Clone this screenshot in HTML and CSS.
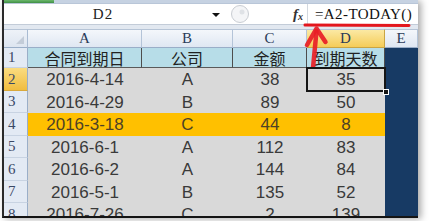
FILE: index.html
```html
<!DOCTYPE html>
<html>
<head>
<meta charset="utf-8">
<link rel="stylesheet" href="styles.css">
</head>
<body>
<div class="window">
  <div class="topstrip"><div class="green"></div></div>
  <div class="fbar">
    <div class="namebox">D2</div>
    <div class="nbdrop"><span class="tri"></span></div>
    <div class="splitter">
      <svg width="20" height="21" viewBox="0 0 20 21">
        <circle cx="10" cy="10" r="8.5" fill="#f4f5f7" stroke="#c9cdd3" stroke-width="1"/>
        <circle cx="12" cy="8" r="2.5" fill="#dfe2e6"/>
      </svg>
    </div>
    <div class="fxzone"><span class="fx"><i>f</i><span class="fxx">x</span></span></div>
    <div class="finput">=A2-TODAY()</div>
  </div>
  <div class="gap"></div>
  <div class="sheet">
    <div class="corner"><span class="corner-tri"></span></div>
    <div class="colh">A</div>
    <div class="colh">B</div>
    <div class="colh">C</div>
    <div class="colh colh-sel">D</div>
    <div class="colh">E</div>

    <div class="rowh">1</div>
    <div class="head">合同到期日</div>
    <div class="head">公司</div>
    <div class="head">金额</div>
    <div class="head">到期天数</div>
    <div class="ecol"></div>

    <div class="rowh rowh-sel">2</div>
    <div class="cell">2016-4-14</div>
    <div class="cell">A</div>
    <div class="cell">38</div>
    <div class="cell cell-sel">35<span class="handle"></span></div>
    <div class="ecol"></div>

    <div class="rowh">3</div>
    <div class="cell">2016-4-29</div>
    <div class="cell">B</div>
    <div class="cell">89</div>
    <div class="cell">50</div>
    <div class="ecol"></div>

    <div class="rowh">4</div>
    <div class="cell hl">2016-3-18</div>
    <div class="cell hl">C</div>
    <div class="cell hl">44</div>
    <div class="cell hl">8</div>
    <div class="ecol"></div>

    <div class="rowh">5</div>
    <div class="cell">2016-6-1</div>
    <div class="cell">A</div>
    <div class="cell">112</div>
    <div class="cell">83</div>
    <div class="ecol"></div>

    <div class="rowh">6</div>
    <div class="cell">2016-6-2</div>
    <div class="cell">A</div>
    <div class="cell">144</div>
    <div class="cell">84</div>
    <div class="ecol"></div>

    <div class="rowh">7</div>
    <div class="cell">2016-5-1</div>
    <div class="cell">B</div>
    <div class="cell">135</div>
    <div class="cell">52</div>
    <div class="ecol"></div>

    <div class="rowh">8</div>
    <div class="cell">2016-7-26</div>
    <div class="cell">C</div>
    <div class="cell">2</div>
    <div class="cell">139</div>
    <div class="ecol"></div>
  </div>
</div>
<svg class="annot" width="430" height="221" viewBox="0 0 430 221">
  <line x1="305" y1="25" x2="409" y2="25.5" stroke="#e3161d" stroke-width="3" stroke-linecap="round"/>
  <path d="M313 68 L316.5 31" stroke="#e81e26" stroke-width="4.5" stroke-linecap="round" fill="none" opacity="0.92"/>
  <path d="M307 45 L316.5 28.5 L325.5 42" stroke="#e81e26" stroke-width="4.5" stroke-linecap="round" stroke-linejoin="round" fill="none" opacity="0.92"/>
</svg>
</body>
</html>
```

FILE: styles.css
```css
* { box-sizing: border-box; }

html, body {
  margin: 0;
  padding: 0;
  background: #ffffff;
  width: 430px;
  height: 221px;
  overflow: hidden;
}

body {
  position: relative;
  font-family: "Liberation Sans", Arial, sans-serif;
}

.window {
  margin-left: 2px;
  width: 416px;
  height: 218px;
  border-left: 2px solid #2a2a2a;
  border-bottom: 2px solid #141414;
  overflow: hidden;
  background: #e4e9f0;
  box-shadow: 3px 1px 7px rgba(0, 0, 0, 0.35);
}

.topstrip {
  height: 3px;
  background: #c6d2e2;
  display: flex;
}

.green {
  width: 50px;
  height: 3px;
  background: linear-gradient(#6cb86c, #3f8f45);
}

.fbar {
  height: 22px;
  display: flex;
  background: #ffffff;
  border-top: 1px solid #b9c6d8;
  border-bottom: 1px solid #c3ccd8;
}

.namebox {
  width: 198px;
  display: flex;
  align-items: center;
  justify-content: center;
  font-family: "Liberation Serif", "DejaVu Serif", serif;
  font-size: 15px;
  letter-spacing: 1px;
  color: #222;
  line-height: 1;
}

.nbdrop {
  width: 28px;
  display: flex;
  align-items: center;
  justify-content: center;
}

.tri {
  width: 0;
  height: 0;
  border-left: 4px solid transparent;
  border-right: 4px solid transparent;
  border-top: 4px solid #111;
  margin-top: 1px;
}

.splitter {
  width: 20px;
  display: flex;
  align-items: center;
}

.splitter svg { display: block; }

.fxzone {
  width: 57px;
  display: flex;
  align-items: center;
  justify-content: flex-end;
  padding-right: 4px;
}

.fx {
  font-family: "Liberation Serif", serif;
  font-size: 15px;
  font-weight: bold;
  color: #333;
  line-height: 1;
}

.fx i { font-style: italic; }

.fxx {
  font-size: 10px;
  font-style: italic;
  position: relative;
  top: 1px;
}

.finput {
  flex: 1;
  border-left: 1px solid #d3d8df;
  padding-left: 7px;
  display: flex;
  align-items: center;
  font-family: "Liberation Serif", "DejaVu Serif", serif;
  font-size: 15px;
  letter-spacing: 0.4px;
  color: #111;
  white-space: nowrap;
  line-height: 1;
}

.gap {
  height: 4px;
  background: #e2e8f0;
}

.sheet {
  display: grid;
  grid-template-columns: 24px 114px 91px 74px 78px 33px;
  grid-template-rows: 19px 20px 23px 22px 23px 22px 23px 22px 23px;
}

.corner {
  background: linear-gradient(#eef2f8, #dde5f0);
  border-right: 1px solid #a9bbd2;
  border-bottom: 1px solid #9aaec8;
  border-top: 1px solid #b6c4d6;
  position: relative;
}

.corner-tri {
  position: absolute;
  right: 3px;
  bottom: 3px;
  width: 0;
  height: 0;
  border-left: 8px solid transparent;
  border-bottom: 8px solid #c3ccd8;
}

.colh {
  background: linear-gradient(#f4f7fb, #dfe7f2);
  border-right: 1px solid #b4c4d8;
  border-bottom: 1px solid #9aaec8;
  border-top: 1px solid #b6c4d6;
  display: flex;
  align-items: center;
  justify-content: center;
  font-family: "Liberation Serif", "DejaVu Serif", serif;
  font-size: 15px;
  line-height: 1;
  color: #2b3b58;
}

.colh-sel {
  background: linear-gradient(#fbe9a4, #f5cc58);
  border-right-color: #c9a544;
  border-bottom-color: #c9a544;
}

.rowh {
  background: #e3eaf4;
  border-right: 1px solid #9aaec8;
  border-bottom: 1px solid #c8d3e2;
  display: flex;
  align-items: center;
  padding-left: 4px;
  font-family: "Liberation Serif", "DejaVu Serif", serif;
  font-size: 15px;
  line-height: 1;
  color: #3a4866;
}

.rowh-sel {
  background: linear-gradient(#fadc80, #f1bd40);
  border-bottom-color: #d9a93c;
}

.head {
  background: #b7dde8;
  border-right: 1px solid #4d4d4d;
  border-bottom: 1px solid #5a5a5a;
  display: flex;
  align-items: center;
  justify-content: center;
  font-family: "Noto Sans CJK SC", "Noto Sans", sans-serif;
  font-size: 16px;
  line-height: 1;
  color: #222;
  white-space: nowrap;
}

.ecol {
  background: #173a64;
}

.cell {
  background: #d9d9d9;
  display: flex;
  align-items: center;
  justify-content: center;
  font-size: 17px;
  line-height: 1;
  color: #3a3a3a;
  position: relative;
}

.cell.hl {
  background: #ffc000;
  color: #4d4226;
}

.cell-sel {
  outline: 2px solid #151515;
  outline-offset: -1px;
  z-index: 1;
}

.handle {
  position: absolute;
  right: -4px;
  bottom: -4px;
  width: 6px;
  height: 6px;
  background: #151515;
  border: 1px solid #ffffff;
}

.annot {
  position: absolute;
  left: 0;
  top: 0;
  pointer-events: none;
}
```
